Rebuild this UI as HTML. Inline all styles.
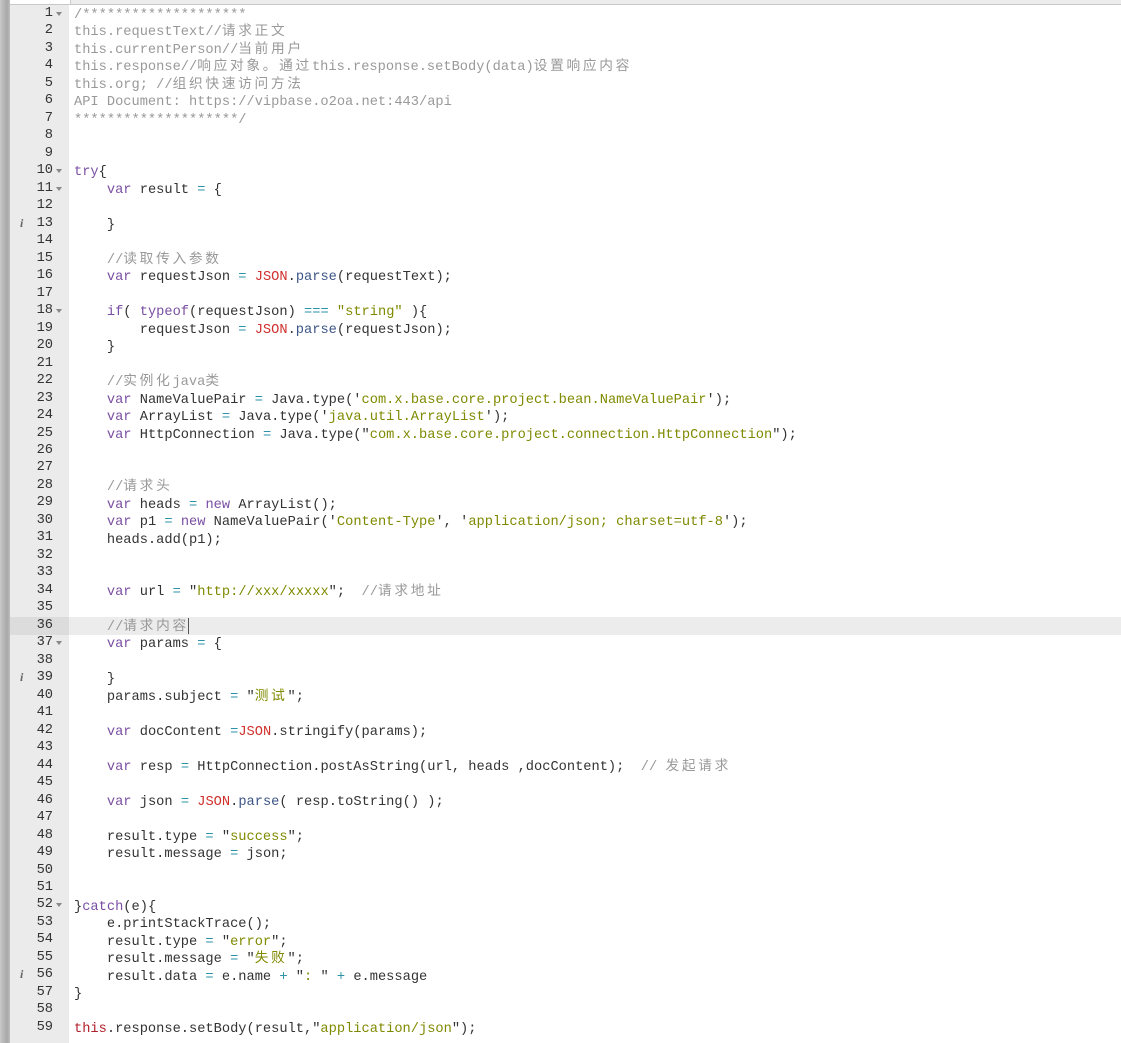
<!DOCTYPE html>
<html><head><meta charset="utf-8"><style>
html,body{margin:0;padding:0;width:1121px;height:1043px;overflow:hidden;background:#fff}
#strip{position:absolute;left:0;top:0;width:10px;height:1043px;background:linear-gradient(to right,#c8c8c8,#a8a8a8 70%,#bdbdbd)}
#top{position:absolute;left:10px;top:0;width:1111px;height:4px;background:#ececec;border-bottom:1px solid #c8c8c8}
#top i{position:absolute;left:0;top:0;width:60px;height:4px;background:#fff;border-right:1px solid #ccc}
#gut{position:absolute;left:10px;top:5px;width:59px;height:1038px;background:#ebebeb}
#act{position:absolute;left:69px;top:617px;width:1052px;height:17.5px;background:#ececec}
#actg{position:absolute;left:10px;top:617px;width:59px;height:17.5px;background:#dcdcdc}
.ln{position:absolute;left:10px;width:43px;text-align:right;font:13.7px "Liberation Mono",monospace;color:#333;line-height:17.5px}
.fd{position:absolute;left:56px;width:0;height:0;border-left:3px solid transparent;border-right:3px solid transparent;border-top:4px solid #888}
.inf{position:absolute;left:20px;font:italic bold 12px "Liberation Serif",serif;color:#666;line-height:17.5px}
pre{position:absolute;left:74px;top:7px;margin:0;font:13.7px "Liberation Mono","Noto Sans CJK SC",monospace;line-height:17.48px;color:#333}
.z{letter-spacing:2.7px}
.k{color:#7a4fa3}.s{color:#7f8a00}.o{color:#2a93a8}.r{color:#d0312d}.f{color:#3c5588}.c{color:#999}.t{color:#b0202a}
#cur{position:absolute;left:188px;top:618px;width:1px;height:16px;background:#555}
</style></head><body>
<div id="strip"></div><div id="top"><i></i></div>
<div id="gut"></div><div id="actg"></div><div id="act"></div>
<div id="nums"></div>
<pre><span class="c">/********************
this.requestText//<span class="z">请求正文</span>
this.currentPerson//<span class="z">当前用户</span>
this.response//<span class="z">响应对象。通过</span>this.response.setBody(data)<span class="z">设置响应内容</span>
this.org; //<span class="z">组织快速访问方法</span>
API Document: https://vipbase.o2oa.net:443/api
********************/</span>


<span class="k">try</span>{
    <span class="k">var</span> result <span class="o">=</span> {

    }

    <span class="c">//<span class="z">读取传入参数</span></span>
    <span class="k">var</span> requestJson <span class="o">=</span> <span class="r">JSON</span>.<span class="f">parse</span>(requestText);

    <span class="k">if</span>( <span class="k">typeof</span>(requestJson) <span class="o">===</span> <span class="s">"string"</span> ){
        requestJson <span class="o">=</span> <span class="r">JSON</span>.<span class="f">parse</span>(requestJson);
    }

    <span class="c">//<span class="z">实例化</span>java<span class="z">类</span></span>
    <span class="k">var</span> NameValuePair <span class="o">=</span> Java.type('<span class="s">com.x.base.core.project.bean.NameValuePair</span>');
    <span class="k">var</span> ArrayList <span class="o">=</span> Java.type('<span class="s">java.util.ArrayList</span>');
    <span class="k">var</span> HttpConnection <span class="o">=</span> Java.type("<span class="s">com.x.base.core.project.connection.HttpConnection</span>");


    <span class="c">//<span class="z">请求头</span></span>
    <span class="k">var</span> heads <span class="o">=</span> <span class="k">new</span> ArrayList();
    <span class="k">var</span> p1 <span class="o">=</span> <span class="k">new</span> NameValuePair('<span class="s">Content-Type</span>', '<span class="s">application/json; charset=utf-8</span>');
    heads.add(p1);


    <span class="k">var</span> url <span class="o">=</span> "<span class="s">http://xxx/xxxxx</span>";  <span class="c">//<span class="z">请求地址</span></span>

    <span class="c">//<span class="z">请求内容</span></span>
    <span class="k">var</span> params <span class="o">=</span> {

    }
    params.subject <span class="o">=</span> "<span class="s z">测试</span>";

    <span class="k">var</span> docContent <span class="o">=</span><span class="r">JSON</span>.stringify(params);

    <span class="k">var</span> resp <span class="o">=</span> HttpConnection.postAsString(url, heads ,docContent);  <span class="c">// <span class="z">发起请求</span></span>

    <span class="k">var</span> json <span class="o">=</span> <span class="r">JSON</span>.<span class="f">parse</span>( resp.toString() );

    result.type <span class="o">=</span> "<span class="s">success</span>";
    result.message <span class="o">=</span> json;


}<span class="k">catch</span>(e){
    e.printStackTrace();
    result.type <span class="o">=</span> "<span class="s">error</span>";
    result.message <span class="o">=</span> "<span class="s z">失败</span>";
    result.data <span class="o">=</span> e.name <span class="o">+</span> "<span class="s">: </span>" <span class="o">+</span> e.message
}

<span class="t">this</span>.response.setBody(result,"<span class="s">application/json</span>");</pre>
<div id="cur"></div>
<script>
var h='';for(var i=1;i<=59;i++){var t=5+(i-1)*17.48;h+='<div class="ln" style="top:'+t+'px">'+i+'</div>';}
[1,10,11,18,37,52].forEach(function(n){h+='<div class="fd" style="top:'+(5+(n-1)*17.48+7)+'px"></div>';});
[13,39,56].forEach(function(n){h+='<div class="inf" style="top:'+(5+(n-1)*17.48)+'px">i</div>';});
document.getElementById('nums').innerHTML=h;
</script>
</body></html>
